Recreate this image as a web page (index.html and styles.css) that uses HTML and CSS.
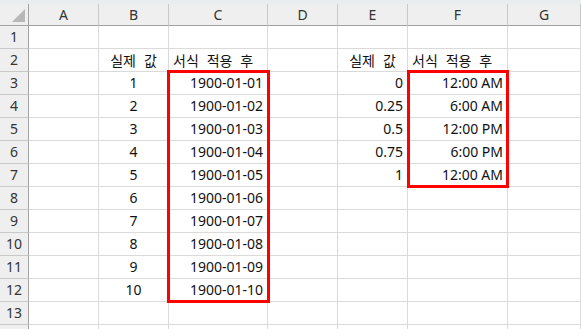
FILE: index.html
```html
<!DOCTYPE html>
<html lang="ko">
<head>
  <meta charset="UTF-8" />
  <meta name="viewport" content="width=device-width, initial-scale=1.0"/>
  <title>서식 적용 - Sheet</title>
  <link rel="stylesheet" href="styles.css">
</head>
<body>
  <div class="ribbon-edge"></div>
  <div class="sheet">
    <!-- column headers -->
    <div class="corner"><span class="tri"></span></div>
    <div class="col-head">A</div>
    <div class="col-head">B</div>
    <div class="col-head">C</div>
    <div class="col-head">D</div>
    <div class="col-head">E</div>
    <div class="col-head">F</div>
    <div class="col-head">G</div>

    <div class="row-head">1</div>
    <div class="cell"></div><div class="cell"></div><div class="cell"></div><div class="cell"></div><div class="cell"></div><div class="cell"></div><div class="cell"></div>

    <div class="row-head">2</div>
    <div class="cell"></div>
    <div class="cell center ko">실제 값</div>
    <div class="cell ko">서식 적용 후</div>
    <div class="cell"></div>
    <div class="cell center ko">실제 값</div>
    <div class="cell ko">서식 적용 후</div>
    <div class="cell"></div>

    <div class="row-head">3</div>
    <div class="cell"></div><div class="cell center">1</div><div class="cell num">1900-01-01</div>
    <div class="cell"></div><div class="cell num">0</div><div class="cell num">12:00 AM</div><div class="cell"></div>

    <div class="row-head">4</div>
    <div class="cell"></div><div class="cell center">2</div><div class="cell num">1900-01-02</div>
    <div class="cell"></div><div class="cell num">0.25</div><div class="cell num">6:00 AM</div><div class="cell"></div>

    <div class="row-head">5</div>
    <div class="cell"></div><div class="cell center">3</div><div class="cell num">1900-01-03</div>
    <div class="cell"></div><div class="cell num">0.5</div><div class="cell num">12:00 PM</div><div class="cell"></div>

    <div class="row-head">6</div>
    <div class="cell"></div><div class="cell center">4</div><div class="cell num">1900-01-04</div>
    <div class="cell"></div><div class="cell num">0.75</div><div class="cell num">6:00 PM</div><div class="cell"></div>

    <div class="row-head">7</div>
    <div class="cell"></div><div class="cell center">5</div><div class="cell num">1900-01-05</div>
    <div class="cell"></div><div class="cell num">1</div><div class="cell num">12:00 AM</div><div class="cell"></div>

    <div class="row-head">8</div>
    <div class="cell"></div><div class="cell center">6</div><div class="cell num">1900-01-06</div>
    <div class="cell"></div><div class="cell"></div><div class="cell"></div><div class="cell"></div>

    <div class="row-head">9</div>
    <div class="cell"></div><div class="cell center">7</div><div class="cell num">1900-01-07</div>
    <div class="cell"></div><div class="cell"></div><div class="cell"></div><div class="cell"></div>

    <div class="row-head">10</div>
    <div class="cell"></div><div class="cell center">8</div><div class="cell num">1900-01-08</div>
    <div class="cell"></div><div class="cell"></div><div class="cell"></div><div class="cell"></div>

    <div class="row-head">11</div>
    <div class="cell"></div><div class="cell center">9</div><div class="cell num">1900-01-09</div>
    <div class="cell"></div><div class="cell"></div><div class="cell"></div><div class="cell"></div>

    <div class="row-head">12</div>
    <div class="cell"></div><div class="cell center">10</div><div class="cell num">1900-01-10</div>
    <div class="cell"></div><div class="cell"></div><div class="cell"></div><div class="cell"></div>

    <div class="row-head">13</div>
    <div class="cell"></div><div class="cell"></div><div class="cell"></div><div class="cell"></div><div class="cell"></div><div class="cell"></div><div class="cell"></div>

    <div class="row-head"></div>
    <div class="cell"></div><div class="cell"></div><div class="cell"></div><div class="cell"></div><div class="cell"></div><div class="cell"></div><div class="cell"></div>

    <!-- highlighted ranges -->
    <div class="range range-dates"></div>
    <div class="range range-times"></div>
  </div>
</body>
</html>
```

FILE: styles.css
```css
:root {
  --grid: #dadada;
  --head-bg: #efefef;
  --head-line: #c9c9c9;
  --head-edge: #a2a2a2;
  --text: #111;
  --mark: #ff0000;
}
body {
  margin: 0;
  background: #fff;
  font-family: "Noto Sans", "Noto Sans CJK KR", sans-serif;
  font-size: 14px;
  color: var(--text);
  overflow: hidden;
}
.ribbon-edge {
  height: 4px;
  background: #e8edef;
}
.sheet {
  position: relative;
  display: grid;
  grid-template-columns: 29px 70px 70px 99px 70px 70px 100px 1fr;
  grid-template-rows: 22px;
  grid-auto-rows: 23px;
}
.cell, .col-head, .row-head, .corner {
  box-sizing: border-box;
  display: flex;
  align-items: center;
  border-right: 1px solid var(--grid);
  border-bottom: 1px solid var(--grid);
  padding: 0 4px;
  white-space: nowrap;
  line-height: 1;
}
.cell.center { justify-content: center; }
.cell.num { justify-content: flex-end; }
.cell.ko {
  font-family: "Noto Sans CJK KR", sans-serif;
  word-spacing: 4px;
}

/* headers */
.corner {
  position: relative;
  background: var(--head-bg);
  border-right: 1px solid var(--head-edge);
  border-bottom: 1px solid var(--head-edge);
}
.corner .tri {
  position: absolute;
  right: 3px; bottom: 3px;
  width: 0; height: 0;
  border-left: 13px solid transparent;
  border-bottom: 13px solid #b8b8b8;
}
.col-head {
  background: var(--head-bg);
  justify-content: center;
  border-right-color: var(--head-line);
  border-bottom: 1px solid var(--head-edge);
  color: #333;
}
.row-head {
  background: var(--head-bg);
  justify-content: center;
  border-right: 1px solid var(--head-edge);
  border-bottom-color: var(--head-line);
  color: #333;
  padding: 0;
}

/* red outline around a range of cells */
.range {
  position: absolute;
  inset: -2px -2px -1px -2px;
  border: 3px solid var(--mark);
  pointer-events: none;
}
.range-dates { grid-column: 4 / 5; grid-row: 4 / 14; }
.range-times { grid-column: 7 / 8; grid-row: 4 / 9; inset: -2px -1px -1px -1px; }
```
